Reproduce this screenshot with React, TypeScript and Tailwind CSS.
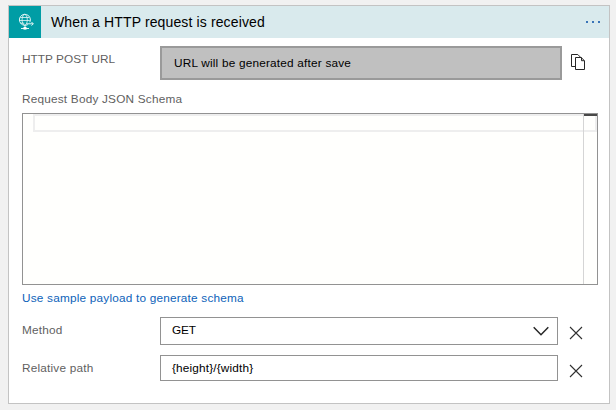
function GlobeIcon() {
  return (
    <svg width="18" height="18" viewBox="0 0 18 18" fill="none" stroke="#e4f5f5" strokeWidth="1" aria-hidden="true">
      <path d="M13.8 9.3A5.5 5.5 0 1 0 9 12.3c1.2 0 2-.2 2.8-.7" />
      <ellipse cx="8.7" cy="6.8" rx="2.6" ry="5.4" strokeWidth=".8" />
      <path d="M4.3 4.5h9M3.2 7.5h10.6M4.3 10.2h4" strokeWidth=".8" />
      <path d="M9 12.3v2M5 15.5h8" />
      <rect x="7.5" y="14" width="3" height="2.6" fill="#fff" stroke="none" />
      <path d="M10.2 10.8h7M15.5 9l1.8 1.8-1.8 1.8" />
    </svg>
  );
}

function CopyIcon() {
  return (
    <svg width="16" height="18" viewBox="0 0 16 18" fill="none" stroke="#262626" strokeWidth="1" aria-hidden="true">
      <path d="M4 13.5H.5v-12h6.3l2.8 2.8" />
      <path d="M4.5 4.5h5.7l3.3 3.3v8.7h-9z" fill="#fff" />
      <path d="M10.5 4.5v3.2h3" />
    </svg>
  );
}

function CloseIcon() {
  return (
    <svg width="14" height="14" viewBox="0 0 14 14" stroke="#303030" strokeWidth="1.1" aria-hidden="true">
      <path d="M1 1l12 12M13 1L1 13" />
    </svg>
  );
}

function RemoveButton({ label }: { label: string }) {
  return (
    <button aria-label={label} className="ml-[11px] flex h-[14px] w-[14px] items-center justify-center">
      <CloseIcon />
    </button>
  );
}

export default function App() {
  return (
    <div className="h-[410px] w-[616px] overflow-hidden bg-[#f1f1f1] pt-[5px] pl-2 font-['Liberation_Sans',Arial,sans-serif] text-[11.8px] leading-4 tracking-[0.2px] text-[#5f5f5f]">
      <section className="flex h-[399px] w-[602px] flex-col border border-[#c3c3c3] bg-white">
        <header className="flex h-8 shrink-0 items-center bg-[#d9eaed]">
          <div className="flex h-8 w-8 items-center justify-center bg-[#009da5]">
            <GlobeIcon />
          </div>
          <h1 className="ml-[10px] text-[14px] tracking-[0.13px] whitespace-nowrap text-black">When a HTTP request is received</h1>
          <div className="mr-[9px] ml-auto flex gap-1">
            <span className="h-0.5 w-0.5 bg-[#3974b8]" />
            <span className="h-0.5 w-0.5 bg-[#3974b8]" />
            <span className="h-0.5 w-0.5 bg-[#3974b8]" />
          </div>
        </header>

        <div className="mt-2 flex h-[34px] shrink-0 pl-[13px]">
          <span className="w-[138px] pt-[5px] tracking-[0.04px]">HTTP POST URL</span>
          <div className="flex w-[402px] items-center border-2 border-[#9a9a9a] bg-[#c0c0c0] pl-3 text-black">
            URL will be generated after save
          </div>
          <button aria-label="Copy URL" className="mt-[7px] ml-[9px] h-[18px] w-4">
            <CopyIcon />
          </button>
        </div>

        <label className="mt-[11px] ml-[13px] h-4 shrink-0">Request Body JSON Schema</label>
        <div className="mt-1.5 ml-[13px] flex h-[172px] w-[576px] shrink-0 border border-[#929292] bg-[#fffffd] pl-[10px]">
          <div className="h-[18px] w-[550px] border-2 border-r-0 border-[#eeeeee]" />
          <div className="w-[14px] border-l border-[#d5d5d5]">
            <div className="h-0.5 bg-[#484848]" />
            <div className="h-4 border-r-2 border-b-2 border-[#eeeeee]" />
          </div>
        </div>
        <a className="mt-[5px] ml-[13px] h-4 shrink-0 text-[#0d62b9]">Use sample payload to generate schema</a>

        <div className="mt-[11px] flex h-7 shrink-0 items-center pl-[13px]">
          <span className="w-[138px] pb-0.5">Method</span>
          <div className="flex h-7 w-[398px] items-center justify-between border border-[#929292] pr-2 pl-[11px] text-black">
            <span className="pb-0.5 tracking-[-0.1px]">GET</span>
            <svg width="16" height="10" viewBox="0 0 16 10" fill="none" stroke="#262626" strokeWidth="1.5" aria-hidden="true">
              <path d="M.7 1.3L8 8.7l7.3-7.4" />
            </svg>
          </div>
          <div className="pt-1">
            <RemoveButton label="Remove method" />
          </div>
        </div>

        <div className="mt-2.5 flex h-[26px] shrink-0 items-center pl-[13px]">
          <span className="w-[138px]">Relative path</span>
          <div className="flex h-[26px] w-[398px] items-center border border-[#929292] pl-[11px] tracking-[0.16px] text-black">
            {"{height}/{width}"}
          </div>
          <div className="pt-1.5">
            <RemoveButton label="Remove relative path" />
          </div>
        </div>
      </section>
    </div>
  );
}
